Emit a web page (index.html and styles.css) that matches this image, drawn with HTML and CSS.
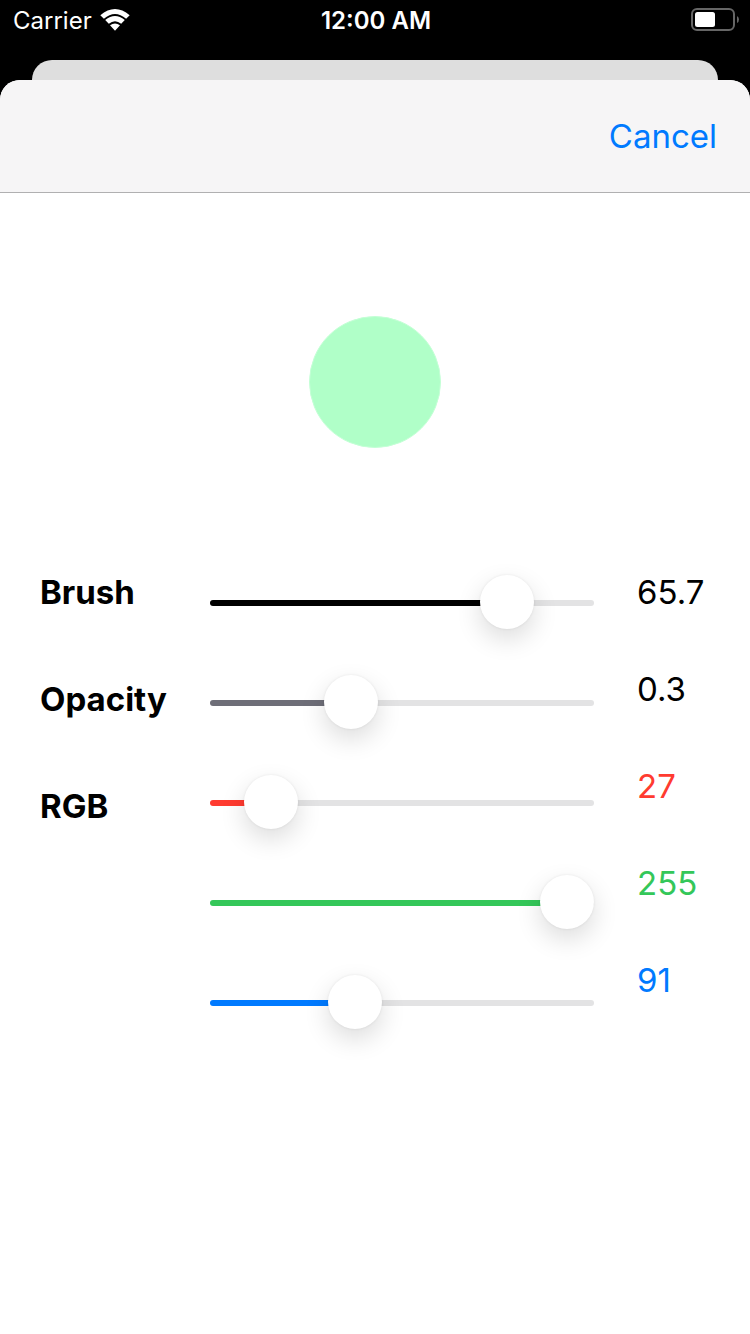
FILE: index.html
```html
<!DOCTYPE html>
<html lang="en">
<head>
<meta charset="utf-8">
<meta name="viewport" content="width=device-width, initial-scale=1">
<title>Brush settings</title>
<link rel="stylesheet" href="styles.css">
</head>
<body>
<header class="status">
  <div class="carrier">
    <span>Carrier</span>
    <svg class="wifi" viewBox="0 0 30 22" aria-hidden="true"><path d="M0.3 6.2Q15-6 29.7 6.2L26.1 9.8Q15 0.2 3.9 9.8ZM5.2 11.1Q15 3 24.8 11.1L21.2 14.7Q15 9.6 8.8 14.7ZM10 16.2Q15 12.6 20 16.2L15 21.8Z"/></svg>
  </div>
  <time class="clock">12:00 AM</time>
  <svg class="battery" viewBox="0 0 48 24" aria-hidden="true"><rect class="shell" x="1" y="1" width="42" height="21" rx="5"/><rect class="charge" x="4" y="4" width="20" height="15" rx="2.5"/><path class="tip" d="M46 8Q48 9 48 11.5T46 15Z"/></svg>
</header>
<div class="backdrop"></div>
<main class="sheet">
  <nav class="navbar"><button class="cancel" type="button">Cancel</button></nav>
  <div class="preview"><div class="swatch"></div></div>
  <form class="controls">
    <div class="labels">
      <label for="brush">Brush</label>
      <label for="opacity">Opacity</label>
      <label for="red">RGB</label>
    </div>
    <div class="sliders">
      <input class="slider ink" id="brush" type="range" min="0" max="1000" value="818" style="--value: 0.818">
      <input class="slider gray" id="opacity" type="range" min="0" max="1000" value="345" style="--value: 0.345">
      <input class="slider red" id="red" type="range" min="0" max="1000" value="104" style="--value: 0.104" aria-label="Red">
      <input class="slider green" id="green" type="range" min="0" max="1000" value="1000" style="--value: 1" aria-label="Green">
      <input class="slider blue" id="blue" type="range" min="0" max="1000" value="357" style="--value: 0.357" aria-label="Blue">
    </div>
    <div class="values">
      <output for="brush">65.7</output>
      <output for="opacity">0.3</output>
      <output class="red" for="red">27</output>
      <output class="green" for="green">255</output>
      <output class="blue" for="blue">91</output>
    </div>
  </form>
</main>
</body>
</html>
```

FILE: styles.css
```css
* { box-sizing: border-box; }

body {
  margin: 0;
  min-height: 100vh;
  display: flex;
  flex-direction: column;
  background: #000;
  color: #000;
  font-family: Inter, "Liberation Sans", sans-serif;
  font-size: 33px;
  line-height: 40px;
}

/* Status bar */
.status {
  height: 60px;
  padding: 8px 11px 0 13px;
  display: grid;
  grid-template-columns: 1fr auto 1fr;
  align-items: start;
  color: #fff;
  font-size: 24px;
  line-height: 26px;
}
.carrier { display: flex; gap: 8px; }
.wifi { width: 30px; height: 22px; margin-top: 1px; fill: #fff; }
.clock { font-weight: 600; }
.battery { width: 48px; height: 24px; justify-self: end; }
.shell { fill: none; stroke: #666; stroke-width: 2; }
.charge { fill: #fff; }
.tip { fill: #666; }

/* Sheet */
.backdrop {
  height: 20px;
  margin: 0 32px;
  border-radius: 20px 20px 0 0;
  background: #dedede;
}
.sheet {
  flex: 1;
  border-radius: 20px 20px 0 0;
  background: #fff;
  overflow: hidden;
}
.navbar {
  height: 113px;
  padding: 0 33px;
  display: flex;
  align-items: center;
  justify-content: flex-end;
  background: #f6f5f6;
  border-bottom: 1px solid #b0b0b1;
}
.cancel {
  padding: 0;
  border: 0;
  background: none;
  color: #007aff;
  font: inherit;
}
.preview {
  padding: 123px 0 124px;
  display: grid;
  place-items: center;
}
.swatch {
  width: 132px;
  height: 132px;
  border: 1px solid #c4ffd6;
  border-radius: 50%;
  background: #b0ffc8;
}

/* Controls */
.controls {
  display: grid;
  grid-template-columns: 170px 1fr 73px;
  padding: 0 40px;
}
.labels {
  display: flex;
  flex-direction: column;
  gap: 67px;
  font-weight: 700;
}
.sliders {
  display: flex;
  flex-direction: column;
  gap: 46px;
  padding: 4px 43px 0 0;
}
.values {
  display: flex;
  flex-direction: column;
  gap: 57px;
}
.red { color: #ff3b30; }
.green { color: #34c759; }
.blue { color: #007aff; }
.ink { color: #000; }
.gray { color: #6e6e78; }

.slider {
  appearance: none;
  display: block;
  width: 100%;
  height: 54px;
  margin: 0;
  background: none;
}
.slider::-webkit-slider-runnable-track {
  height: 6px;
  border-radius: 3px;
  background:
    linear-gradient(currentColor, currentColor) 0 0 / calc(27px + (100% - 54px) * var(--value)) 100% no-repeat,
    #e3e3e4;
}
.slider::-webkit-slider-thumb {
  appearance: none;
  width: 54px;
  height: 54px;
  margin-top: -25px;
  border-radius: 50%;
  background: #fff;
  box-shadow: 0 0 3px rgba(0, 0, 0, 0.08), 0 10px 26px rgba(0, 0, 0, 0.14);
}
```
